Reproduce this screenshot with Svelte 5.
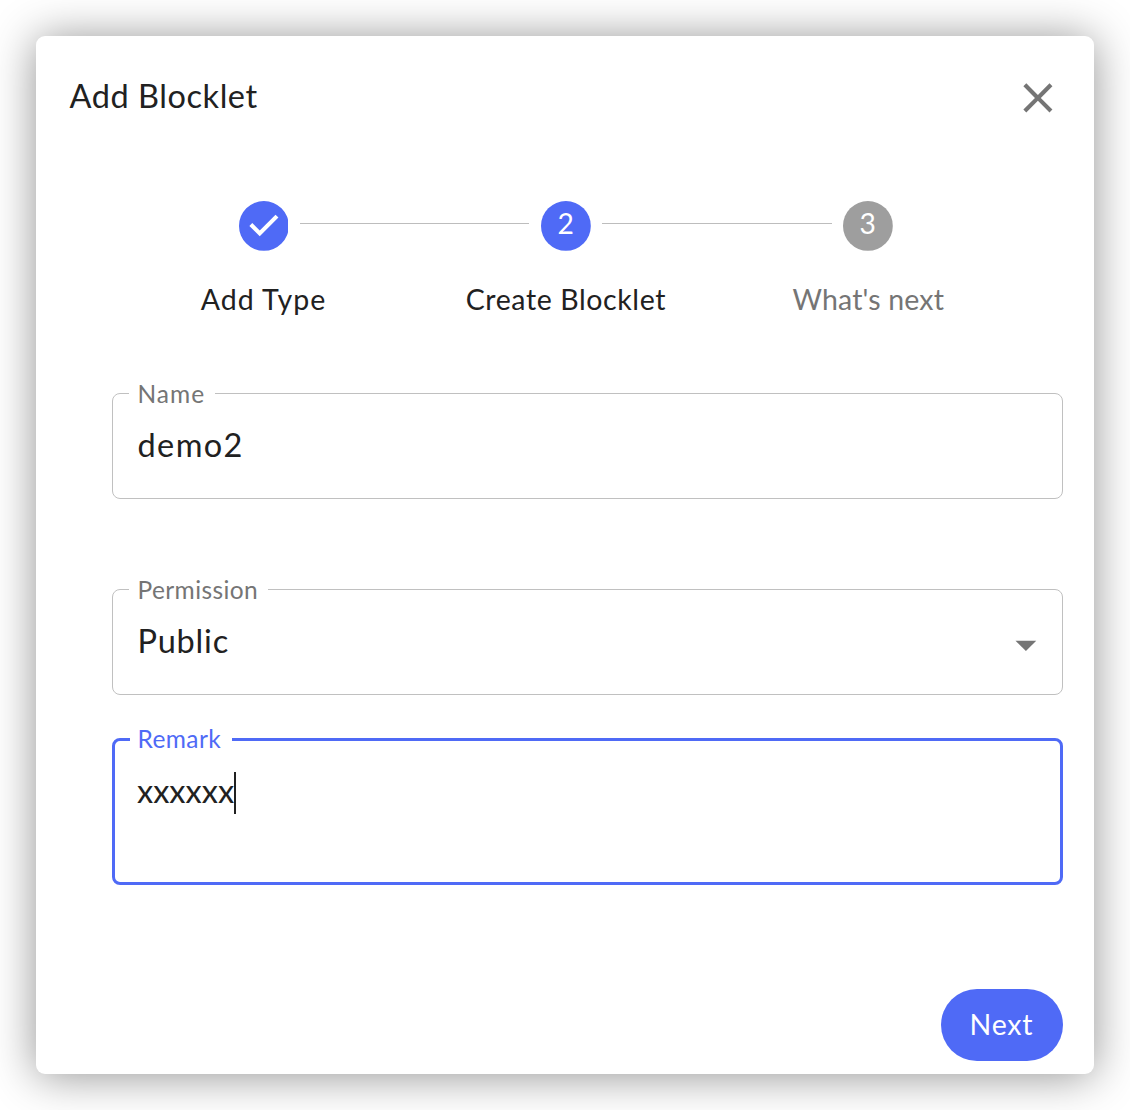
<script>
  const steps = [
    { label: "Add Type", state: "done" },
    { label: "Create Blocklet", state: "active" },
    { label: "What's next", state: "pending" },
  ];
</script>

<div class="dialog" role="dialog" aria-labelledby="dialog-title">
  <header class="dialog-header">
    <h2 id="dialog-title"><span>Add Blocklet</span></h2>
    <button class="close" aria-label="Close">
      <svg class="icon" viewBox="0 0 24 24">
        <path
          d="M19 6.41L17.59 5 12 10.59 6.41 5 5 6.41 10.59 12 5 17.59 6.41 19 12 13.41 17.59 19 19 17.59 13.41 12z"
        />
      </svg>
    </button>
  </header>

  <div class="stepper">
    {#each steps as step, i}
      <div class="step {step.state}">
        <div class="track">
          <span class="line" class:hidden={i === 0}></span>
          <svg class="icon" viewBox="0 0 24 24">
            {#if step.state === "done"}
              <path
                d="M12 0a12 12 0 1 0 0 24 12 12 0 0 0 0-24zm-2 17l-5-5 1.4-1.4 3.6 3.6 7.6-7.6L19 8l-9 9z"
              />
            {:else}
              <circle cx="12" cy="12" r="12" />
              <text x="11.9" y="16" text-anchor="middle">{i + 1}</text>
            {/if}
          </svg>
          <span class="line" class:hidden={i === steps.length - 1}></span>
        </div>
        <span class="step-label">{step.label}</span>
      </div>
    {/each}
  </div>

  <form class="form">
    <fieldset class="field name">
      <legend>Name</legend>
      <div class="value"><span>demo2</span></div>
    </fieldset>

    <fieldset class="field permission">
      <legend>Permission</legend>
      <div class="value"><span>Public</span></div>
      <svg class="icon" viewBox="0 0 24 24"><path d="M7 10l5 5 5-5z" /></svg>
    </fieldset>

    <fieldset class="field remark focused">
      <legend>Remark</legend>
      <div class="value"><span>xxxxxx</span><i class="caret"></i></div>
    </fieldset>
  </form>

  <footer class="dialog-footer">
    <button class="next" type="button"><span>Next</span></button>
  </footer>
</div>

<style>
  :global(body) {
    background: #fff;
  }

  .dialog {
    box-sizing: border-box;
    width: 1058px;
    height: 1038px;
    margin: 36px;
    border-radius: 9px;
    background: #fff;
    box-shadow: 0 2px 45px rgba(0, 0, 0, 0.43);
    color: #212121;
    font-family: Lato, "Open Sans", sans-serif;
    display: flex;
    flex-direction: column;
  }

  button {
    border: 0;
    padding: 0;
    background: none;
    font-family: inherit;
  }

  .icon {
    display: block;
    flex: none;
    width: 49.8px;
    height: 49.8px;
    fill: #757575;
  }

  .dialog-header {
    display: flex;
    justify-content: space-between;
    align-items: flex-start;
    padding: 36.5px 31px 0 33.5px;
    height: 128.5px;
  }

  h2 {
    margin: 3px 0 0;
    font-size: 32.5px;
    font-weight: 400;
    line-height: 40px;
    letter-spacing: 0.55px;
  }

  /* Stepper */
  .stepper {
    display: grid;
    grid-template-columns: repeat(3, 302.4px);
    margin-left: 76.3px;
    height: 182px;
  }

  .track {
    display: flex;
    align-items: flex-start;
  }

  .line {
    flex: 1;
    height: 1px;
    margin: 22px 0 0 11.6px;
    background: #bdbdbd;
  }

  .line:first-child {
    margin: 22px 11.6px 0 0;
  }

  .hidden {
    visibility: hidden;
  }

  .step .icon {
    fill: #4f6af6;
  }

  .step.pending .icon {
    fill: #9e9e9e;
  }

  .step text {
    fill: #fff;
    font-size: 13.6px;
    font-weight: 400;
  }

  .step-label {
    display: block;
    margin-top: 28.3px;
    font-size: 28.5px;
    line-height: 40px;
    letter-spacing: 0.6px;
    text-align: center;
  }

  .done .step-label {
    letter-spacing: 1px;
  }

  .pending .step-label {
    color: #757575;
    letter-spacing: 0.15px;
  }

  /* Outlined fields: the legend cuts the notch in the border */
  .form {
    display: flex;
    flex-direction: column;
    padding: 0 31px 0 76px;
  }

  .field {
    box-sizing: border-box;
    position: relative;
    margin: 0;
    min-width: 0;
    height: 116px;
    padding: 0 24px 0 16px;
    border: 1px solid #c0c0c0;
    border-radius: 8px;
  }

  .permission {
    margin-top: 80px;
  }

  .remark {
    margin-top: 34px;
    height: 156px;
    padding: 0 22px 0 15px;
  }

  .focused {
    border: 3px solid #4f6af6;
  }

  legend {
    padding: 0 10px 0 8.5px;
    color: #757575;
    font-size: 24.5px;
    line-height: 21px;
    letter-spacing: 0.4px;
  }

  .name legend {
    letter-spacing: 1px;
  }

  .focused legend {
    padding: 0 10.5px 2px 7.5px;
    line-height: 19px;
    color: #4f6af6;
  }

  .value {
    display: flex;
    align-items: center;
    height: 40px;
    margin: 21px 0 0 8.5px;
    font-size: 32.5px;
    line-height: 40px;
  }

  .name .value {
    letter-spacing: 1.4px;
  }

  .permission .value {
    letter-spacing: 0.8px;
  }

  .remark .value {
    margin: 21px 0 0 7px;
  }

  .caret {
    width: 2px;
    height: 42px;
    margin-top: 4px;
    background: #212121;
  }

  .permission .icon {
    position: absolute;
    top: 20px;
    right: 11.5px;
  }

  .dialog-footer {
    display: flex;
    justify-content: flex-end;
    margin-top: 104px;
    padding-right: 31px;
  }

  .next {
    width: 122px;
    height: 72px;
    padding: 0 1px 3px 0;
    border-radius: 36px;
    background: #4f6af6;
    color: #fff;
    font-size: 28.5px;
    letter-spacing: 0.8px;
  }
</style>
